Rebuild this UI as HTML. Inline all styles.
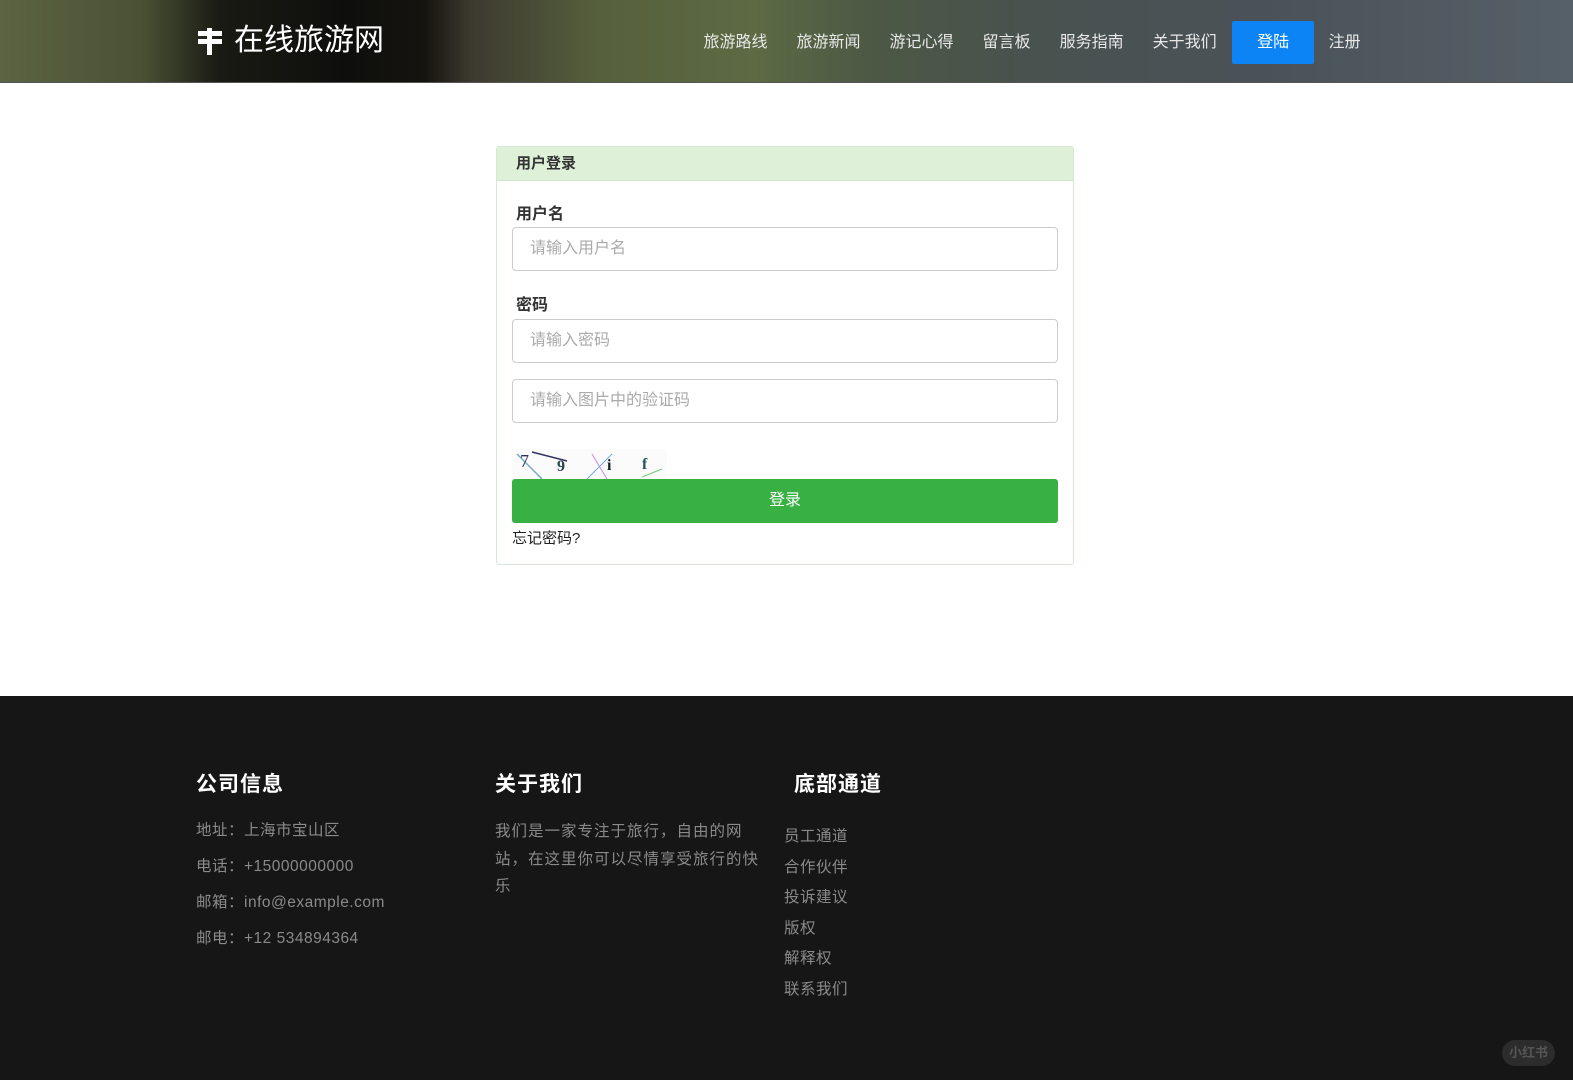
<!DOCTYPE html>
<html><head><meta charset="utf-8">
<style>
*{margin:0;padding:0;box-sizing:border-box}
body{width:1573px;height:1080px;overflow:hidden;background:#fff;font-family:"Liberation Sans","Noto Sans CJK SC",sans-serif;position:relative}
.hdr{position:absolute;left:0;top:0;width:1573px;height:83px;background:linear-gradient(90deg,#5b6443 0%,#4a5233 9%,#1a1a14 14%,#0e0e0c 22%,#15140f 27%,#3d3a30 30%,#56603c 38%,#5d6a44 48%,#4d5944 55%,#48524e 65%,#4a5258 80%,#566068 100%);border-bottom:1px solid #555}
.logo{position:absolute;left:196px;top:22px;color:#fff;font-size:30px;line-height:38px;display:flex;align-items:center}
.nav{position:absolute;top:21px;left:689px;display:flex;height:43px;align-items:center}
.nav a{color:#e8e8e8;font-size:16px;padding:0 14.5px;text-decoration:none;line-height:43px}
.nav a.on{background:#0d84f5;color:#fff;width:82px;text-align:center;padding:0;margin:0 0 0 1px;border-radius:2px}
.box{position:absolute;left:496px;top:146px;width:578px;height:419px;border:1px solid #d5e8d4;border-radius:3px}
.bh{height:34px;background:#dff0d8;border-bottom:1px solid #d0e6cc;font-size:15px;font-weight:bold;color:#333;padding-left:19px;line-height:33px}
.lb{position:absolute;left:19px;font-size:16px;font-weight:bold;color:#333}
.in{position:absolute;left:15px;width:546px;height:44px;border:1px solid #ccc;border-radius:4px;font-size:16px;color:#aaa;padding-left:17px;line-height:42px}
.btn{position:absolute;left:15px;top:332px;width:546px;height:44px;background:#38b043;border-radius:3px;color:#fff;font-size:16px;text-align:center;line-height:44px}
.fg{position:absolute;left:15px;top:380px;font-size:15px;color:#222}
.ft{position:absolute;left:0;top:696px;width:1573px;height:384px;background:#161616}
.ft h3{position:absolute;color:#fff;font-size:21px;font-weight:bold;letter-spacing:1px}
.ft p{position:absolute;color:#8a8a8a;font-size:15.5px;letter-spacing:0.5px}
</style></head><body>
<div class="hdr">
<div class="logo"><svg width="28" height="30" viewBox="0 0 28 30"><rect x="2" y="5" width="24" height="5" fill="#fff"/><rect x="2" y="13" width="24" height="5" fill="#fff"/><rect x="11" y="2" width="5" height="27" fill="#fff"/></svg><span style="margin-left:10px">在线旅游网</span></div>
<div class="nav"><a>旅游路线</a><a>旅游新闻</a><a>游记心得</a><a>留言板</a><a>服务指南</a><a>关于我们</a><a class="on">登陆</a><a>注册</a></div>
</div>
<div class="box">
<div class="bh">用户登录</div>
<div class="lb" style="top:53px">用户名</div>
<div class="in" style="top:80px">请输入用户名</div>
<div class="lb" style="top:144px">密码</div>
<div class="in" style="top:172px">请输入密码</div>
<div class="in" style="top:232px">请输入图片中的验证码</div>
<svg style="position:absolute;left:15px;top:302px" width="155" height="30"><rect width="155" height="30" fill="#fbfbfb"/><line x1="5" y1="5" x2="30" y2="30" stroke="#7ac" stroke-width="1.5"/><line x1="20" y1="3" x2="55" y2="12" stroke="#336" stroke-width="1.5"/><line x1="80" y1="5" x2="95" y2="30" stroke="#c8e" /><line x1="100" y1="5" x2="75" y2="30" stroke="#7ad"/><line x1="130" y1="28" x2="150" y2="20" stroke="#7c7"/><text x="8" y="18" font-size="18" fill="#335" font-family="Liberation Serif">7</text><text x="45" y="22" font-size="16" font-weight="bold" fill="#244" font-family="Liberation Serif">9</text><text x="95" y="21" font-size="16" font-weight="bold" fill="#122" font-family="Liberation Serif">i</text><text x="130" y="20" font-size="16" font-weight="bold" fill="#255" font-family="Liberation Serif">f</text></svg>
<div class="btn">登录</div>
<div class="fg">忘记密码?</div>
</div>
<div class="ft">
<h3 style="left:196px;top:72px">公司信息</h3>
<h3 style="left:495px;top:72px">关于我们</h3>
<h3 style="left:794px;top:72px">底部通道</h3>
<p style="left:196px;top:122px">地址：上海市宝山区</p>
<p style="left:196px;top:158px">电话：+15000000000</p>
<p style="left:196px;top:194px">邮箱：info@example.com</p>
<p style="left:196px;top:230px">邮电：+12 534894364</p>
<p style="left:495px;top:122px;width:272px;line-height:27.5px;letter-spacing:1px">我们是一家专注于旅行，自由的网站，在这里你可以尽情享受旅行的快乐</p>
<p style="left:784px;top:126px;line-height:30.6px">员工通道<br>合作伙伴<br>投诉建议<br>版权<br>解释权<br>联系我们</p>
<div style="position:absolute;left:1502px;top:344px;width:53px;height:26px;border-radius:13px;background:#2c2c2c;color:#555;font-size:13px;font-weight:bold;text-align:center;line-height:26px">小红书</div>
</div>
</body></html>
